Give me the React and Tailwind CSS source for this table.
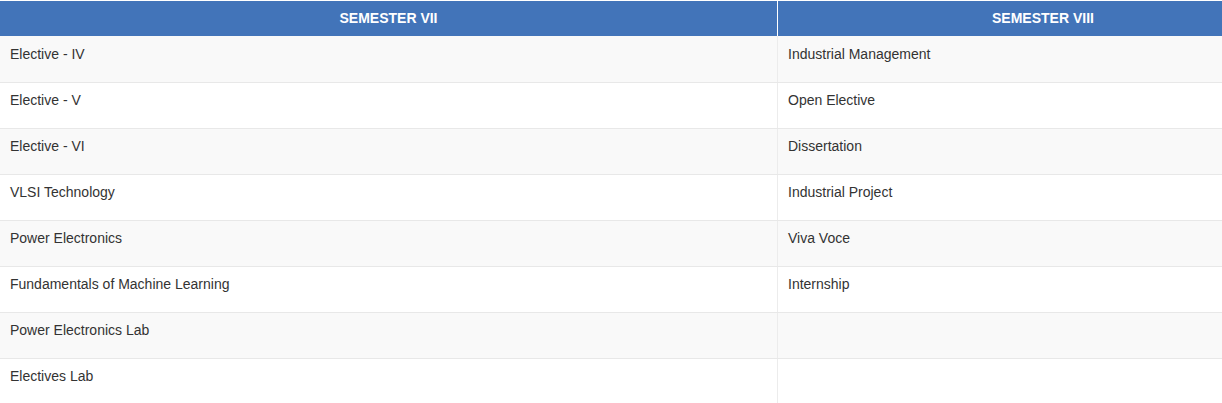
const rows = [
  ['Elective - IV', 'Industrial Management'],
  ['Elective - V', 'Open Elective'],
  ['Elective - VI', 'Dissertation'],
  ['VLSI Technology', 'Industrial Project'],
  ['Power Electronics', 'Viva Voce'],
  ['Fundamentals of Machine Learning', 'Internship'],
  ['Power Electronics Lab', ''],
  ['Electives Lab', ''],
]

const App = () => {
  return (
    <div className="w-[1222px] h-[403px] overflow-hidden bg-white pt-px font-['Liberation_Sans',Arial,sans-serif] text-[14px] text-[#333]">
      <div className="w-[1308px]">
        {/* Header */}
        <div className="flex h-[35px] bg-[#4274b9] text-white font-bold uppercase">
          <div className="w-[777px] shrink-0 flex items-center justify-center">Semester VII</div>
          <div className="w-px shrink-0 bg-white" />
          <div className="w-[530px] shrink-0 flex items-center justify-center">Semester VIII</div>
        </div>

        {/* Body */}
        {rows.map((row, i) => (
          <div
            key={i}
            className={`flex border-b border-[#e8e8e8] ${i === 0 ? 'h-[47px]' : 'h-[46px]'} ${i % 2 === 0 ? 'bg-[#f9f9f9]' : 'bg-white'}`}
          >
            <div className={`w-[777px] shrink-0 px-[10px] leading-5 ${i === 0 ? 'pt-[8px]' : 'pt-[7px]'}`}>{row[0]}</div>
            <div className="w-px shrink-0 bg-[#ececec]" />
            <div className={`w-[530px] shrink-0 px-[10px] leading-5 ${i === 0 ? 'pt-[8px]' : 'pt-[7px]'}`}>{row[1]}</div>
          </div>
        ))}
      </div>
    </div>
  )
}

export default App
